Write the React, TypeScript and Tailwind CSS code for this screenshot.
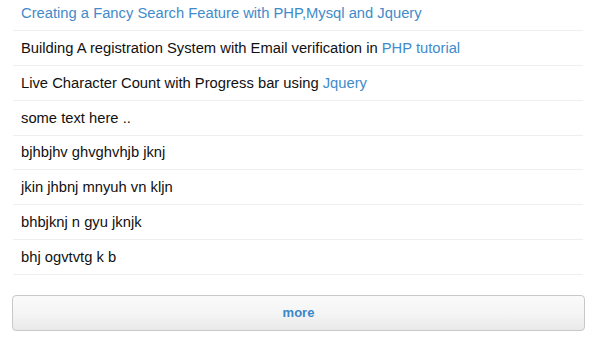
const items: { text: string; link?: string; allLink?: boolean }[] = [
  { text: 'Creating a Fancy Search Feature with PHP,Mysql and Jquery', allLink: true },
  { text: 'Building A registration System with Email verification in ', link: 'PHP tutorial' },
  { text: 'Live Character Count with Progress bar using ', link: 'Jquery' },
  { text: 'some text here ..' },
  { text: 'bjhbjhv ghvghvhjb jknj' },
  { text: 'jkin jhbnj mnyuh vn kljn' },
  { text: 'bhbjknj n gyu jknjk' },
  { text: 'bhj ogvtvtg k b' },
];

export default function App() {
  return (
    <div className="w-[600px] h-[350px] overflow-hidden bg-white font-['Liberation_Sans',Arial,sans-serif] text-[14.75px] text-[#111]">
      <ul className="ml-[13px] w-[570px] -mt-[4px]">
        {items.map((item, i) => (
          <li key={i} className="h-[34.9px] flex items-center px-[8px] border-b border-[#efefef]">
            {item.allLink ? (
              <a className="text-[#428bca]">{item.text}</a>
            ) : (
              <span>
                {item.text}
                {item.link && <a className="text-[#428bca]">{item.link}</a>}
              </span>
            )}
          </li>
        ))}
      </ul>
      <div className="ml-[12px] w-[573px] pt-[20px]">
        <button className="w-full h-[36px] rounded-[4px] border border-[#c8c8c8] bg-gradient-to-b from-[#fafafa] via-[#f5f5f5] to-[#e9e9e9] text-[#3a87c8] font-bold text-[13px]">
          more
        </button>
      </div>
    </div>
  );
}
